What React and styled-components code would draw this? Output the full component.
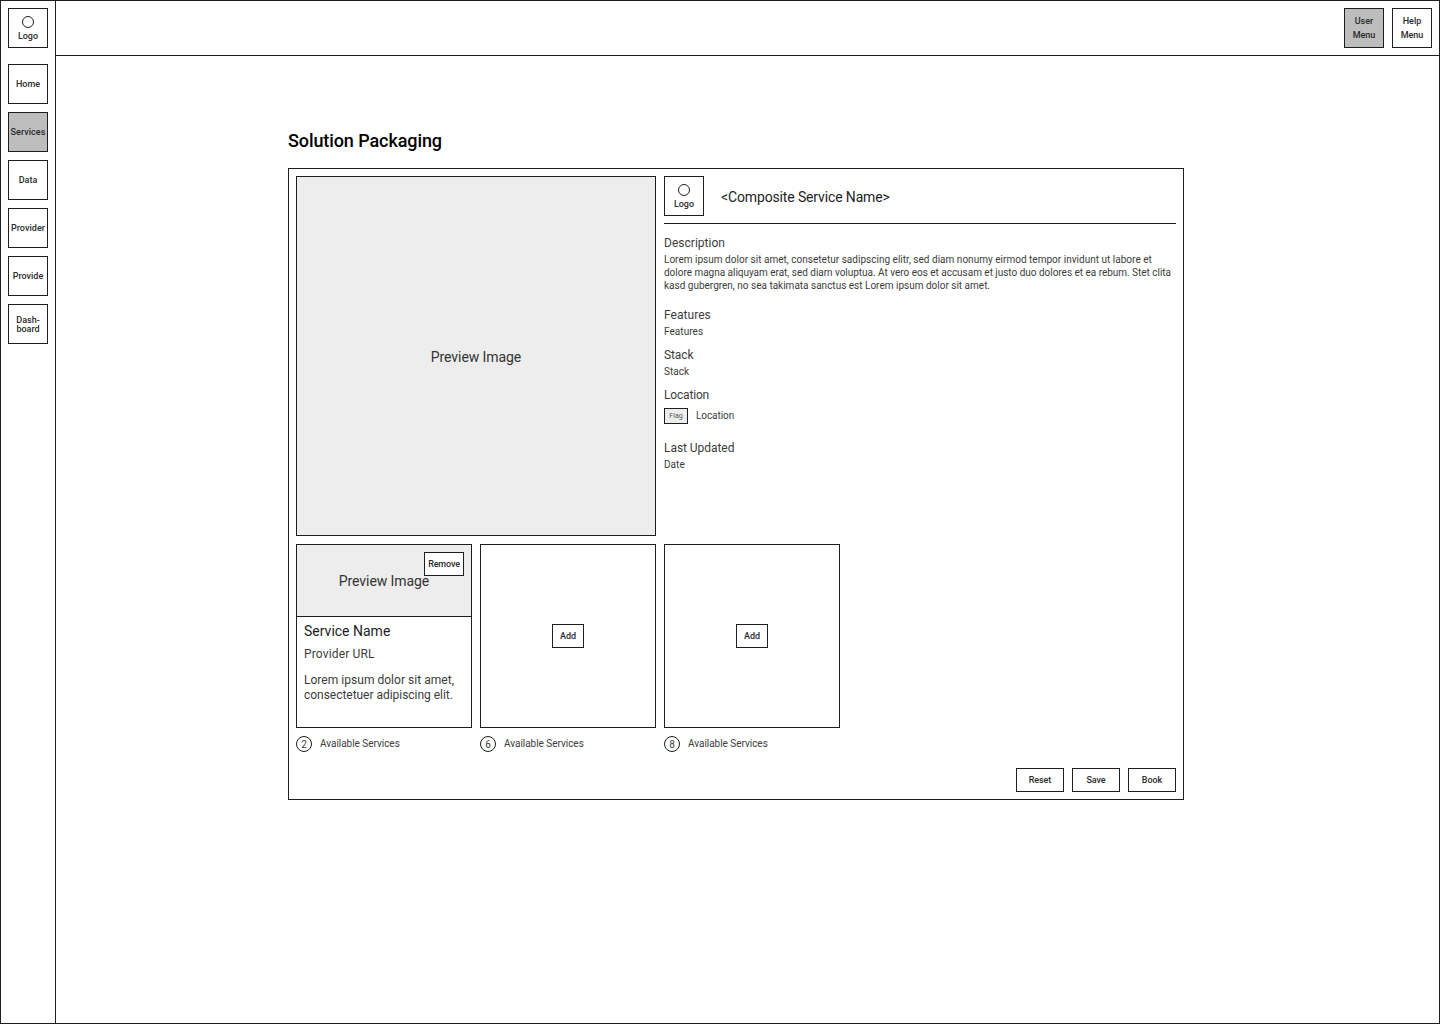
import React from "react";
import styled, { createGlobalStyle } from "styled-components";

const line = "#1d1d1f";

const GlobalStyle = createGlobalStyle`
  *, *::before, *::after { box-sizing: border-box; }
  body { margin: 0; background: #fff; color: #1d1d1f; font-family: Roboto, "Liberation Sans", sans-serif; }
  h1, h2, h3, p { margin: 0; font-weight: 400; }
`;

const Shell = styled.div`
  display: grid;
  grid-template-columns: 55px 1fr;
  width: 1440px;
  height: 1024px;
  border: 1px solid ${line};
`;

const Sidebar = styled.nav`
  display: flex;
  flex-direction: column;
  gap: 8px;
  padding: 7px;
  border-right: 1px solid ${line};
`;

const Column = styled.div`
  display: flex;
  flex-direction: column;
`;

const Header = styled.header`
  display: flex;
  justify-content: flex-end;
  gap: 8px;
  height: 55px;
  padding: 7px;
  border-bottom: 1px solid ${line};
`;

const Tile = styled.button`
  display: flex;
  flex: none;
  flex-direction: column;
  align-items: center;
  justify-content: center;
  width: 40px;
  height: 40px;
  padding: ${(p) => p.$drop || 0}px 0 0;
  border: 1px solid ${line};
  background: ${(p) => (p.$active ? "#bdbdbd" : "#fff")};
  color: #2a2a2b;
  font: 500 9px/${(p) => p.$leading || 9}px Roboto, sans-serif;
  letter-spacing: ${(p) => p.$track ?? 0}px;
  white-space: nowrap;
`;

const LogoTile = styled(Tile)`
  justify-content: flex-start;
  gap: 4px;
  padding-top: 7px;
  margin-bottom: ${(p) => (p.$spaced ? 8 : 0)}px;
`;

const Ring = styled.span`
  width: 12px;
  height: 12px;
  border: 1px solid ${line};
  border-radius: 50%;
`;

const Main = styled.main`
  width: 896px;
  margin: 73px 0 0 232px;
`;

const Title = styled.h1`
  color: #000;
  font-size: 18px;
  font-weight: 500;
  line-height: 24px;
  letter-spacing: -0.09px;
`;

const Panel = styled.section`
  display: flex;
  flex-direction: column;
  height: 632px;
  margin-top: 15px;
  padding: 7px;
  border: 1px solid ${line};
`;

const Overview = styled.div`
  display: grid;
  grid-template-columns: 360px 512px;
  gap: 8px;
`;

const Preview = styled.div`
  display: flex;
  align-items: center;
  justify-content: center;
  height: 360px;
  padding-top: 2px;
  border: 1px solid ${line};
  background: #ededed;
  color: #333;
  font-size: 14px;
  line-height: 16px;
  letter-spacing: -0.07px;
`;

const CardPreview = styled(Preview)`
  position: relative;
  height: 72px;
  padding-top: 1px;
  border-width: 0 0 1px;
`;

const DetailHead = styled.div`
  display: flex;
  align-items: center;
  gap: 17px;
  height: 48px;
  padding-bottom: 7px;
  border-bottom: 1px solid ${line};
`;

const Name = styled.h2`
  padding-top: ${(p) => p.$drop || 0}px;
  font-size: 14px;
  line-height: 20px;
  letter-spacing: ${(p) => p.$track}px;
`;

const Field = styled.div`
  margin-top: ${(p) => p.$top}px;
`;

const Label = styled.h3`
  color: #3c3c3b;
  font-size: 12px;
  line-height: 16px;
  letter-spacing: ${(p) => p.$track ?? 0.1}px;
`;

const Copy = styled.p`
  margin-top: 2px;
  color: #3c3c3b;
  font-size: 10px;
  line-height: 13px;
  letter-spacing: ${(p) => p.$track ?? 0.05}px;
  white-space: nowrap;
`;

const TextLine = styled.span`
  display: block;
  letter-spacing: ${(p) => p.$track}px;
`;

const Place = styled.div`
  display: flex;
  align-items: center;
  gap: 8px;
  margin-top: 5px;
`;

const PlaceName = styled(Copy)`
  margin: 0 0 2px;
`;

const Flag = styled.span`
  display: flex;
  align-items: center;
  justify-content: center;
  width: 24px;
  height: 16px;
  border: 1px solid ${line};
  background: #ededed;
  color: #555;
  font-size: 7px;
  line-height: 8px;
`;

const Slots = styled.div`
  display: flex;
  gap: 8px;
  margin-top: 8px;
`;

const Slot = styled.div`
  width: 176px;
`;

const Card = styled.article`
  height: 184px;
  border: 1px solid ${line};
`;

const EmptyCard = styled(Card)`
  display: flex;
  align-items: center;
  justify-content: center;
`;

const CardBody = styled.div`
  padding: 4px 7px;
`;

const Url = styled(Label)`
  margin-top: 5px;
`;

const Summary = styled.p`
  margin-top: 11px;
  color: #3c3c3b;
  font-size: 12px;
  line-height: 15px;
  white-space: nowrap;
`;

const Availability = styled.div`
  display: flex;
  align-items: center;
  gap: 8px;
  height: 16px;
  margin-top: 8px;
`;

const Count = styled.span`
  display: flex;
  align-items: center;
  justify-content: center;
  width: 16px;
  height: 16px;
  padding-top: 1px;
  border: 1px solid ${line};
  border-radius: 50%;
  color: #3c3c3b;
  font-size: 10px;
  line-height: 11px;
`;

const Button = styled.button`
  width: ${(p) => p.$width}px;
  height: 24px;
  padding: 0;
  border: 1px solid ${line};
  background: #fff;
  color: #2a2a2b;
  font: 500 9px/12px Roboto, sans-serif;
  letter-spacing: ${(p) => p.$track ?? -0.08}px;
`;

const RemoveButton = styled(Button)`
  position: absolute;
  top: 7px;
  right: 7px;
`;

const Actions = styled.div`
  display: flex;
  justify-content: flex-end;
  gap: 8px;
  margin-top: auto;
`;

const nav = [
  { lines: ["Home"] },
  { lines: ["Services"], active: true, track: 0.05 },
  { lines: ["Data"] },
  { lines: ["Provider"], track: 0.05 },
  { lines: ["Provide"] },
  { lines: ["Dash-", "board"], drop: 2 },
];

const description = [
  { text: "Lorem ipsum dolor sit amet, consetetur sadipscing elitr, sed diam nonumy eirmod tempor invidunt ut labore et", track: 0.017 },
  { text: "dolore magna aliquyam erat, sed diam voluptua. At vero eos et accusam et justo duo dolores et ea rebum. Stet clita", track: -0.02 },
  { text: "kasd gubergren, no sea takimata sanctus est Lorem ipsum dolor sit amet.", track: 0 },
];

function Logo({ spaced }) {
  return (
    <LogoTile $spaced={spaced}>
      <Ring />
      <span>Logo</span>
    </LogoTile>
  );
}

function Available({ count }) {
  return (
    <Availability>
      <Count>{count}</Count>
      <PlaceName $track={-0.03}>Available Services</PlaceName>
    </Availability>
  );
}

export default function App() {
  return (
    <>
      <GlobalStyle />
      <Shell>
        <Sidebar>
          <Logo spaced />
          {nav.map((item) => (
            <Tile key={item.lines[0]} $active={item.active} $track={item.track} $drop={item.drop}>
              {item.lines.map((t) => <span key={t}>{t}</span>)}
            </Tile>
          ))}
        </Sidebar>
        <Column>
          <Header>
            <Tile $active $leading={14}><span>User</span><span>Menu</span></Tile>
            <Tile $leading={14}><span>Help</span><span>Menu</span></Tile>
          </Header>
          <Main>
            <Title>Solution Packaging</Title>
            <Panel>
              <Overview>
                <Preview>Preview Image</Preview>
                <div>
                  <DetailHead>
                    <Logo />
                    <Name $track={-0.14} $drop={2}>&lt;Composite Service Name&gt;</Name>
                  </DetailHead>
                  <Field $top={11}>
                    <Label $track={0.02}>Description</Label>
                    <Copy>
                      {description.map((d) => <TextLine key={d.text} $track={d.track}>{d.text}</TextLine>)}
                    </Copy>
                  </Field>
                  <Field $top={15}>
                    <Label $track={0.05}>Features</Label>
                    <Copy>Features</Copy>
                  </Field>
                  <Field $top={9}>
                    <Label $track={-0.1}>Stack</Label>
                    <Copy $track={0}>Stack</Copy>
                  </Field>
                  <Field $top={9}>
                    <Label $track={-0.17}>Location</Label>
                    <Place>
                      <Flag>Flag</Flag>
                      <PlaceName $track={-0.07}>Location</PlaceName>
                    </Place>
                  </Field>
                  <Field $top={16}>
                    <Label $track={-0.05}>Last Updated</Label>
                    <Copy>Date</Copy>
                  </Field>
                </div>
              </Overview>
              <Slots>
                <Slot>
                  <Card>
                    <CardPreview>
                      Preview Image
                      <RemoveButton $width={40} $track={-0.15}>Remove</RemoveButton>
                    </CardPreview>
                    <CardBody>
                      <Name $track={0}>Service Name</Name>
                      <Url $track={0.15}>Provider URL</Url>
                      <Summary>
                        <TextLine $track={0.03}>Lorem ipsum dolor sit amet,</TextLine>
                        <TextLine $track={-0.03}>consectetuer adipiscing elit.</TextLine>
                      </Summary>
                    </CardBody>
                  </Card>
                  <Available count={2} />
                </Slot>
                {[6, 8].map((count) => (
                  <Slot key={count}>
                    <EmptyCard><Button $width={32}>Add</Button></EmptyCard>
                    <Available count={count} />
                  </Slot>
                ))}
              </Slots>
              <Actions>
                <Button $width={48}>Reset</Button>
                <Button $width={48}>Save</Button>
                <Button $width={48}>Book</Button>
              </Actions>
            </Panel>
          </Main>
        </Column>
      </Shell>
    </>
  );
}
